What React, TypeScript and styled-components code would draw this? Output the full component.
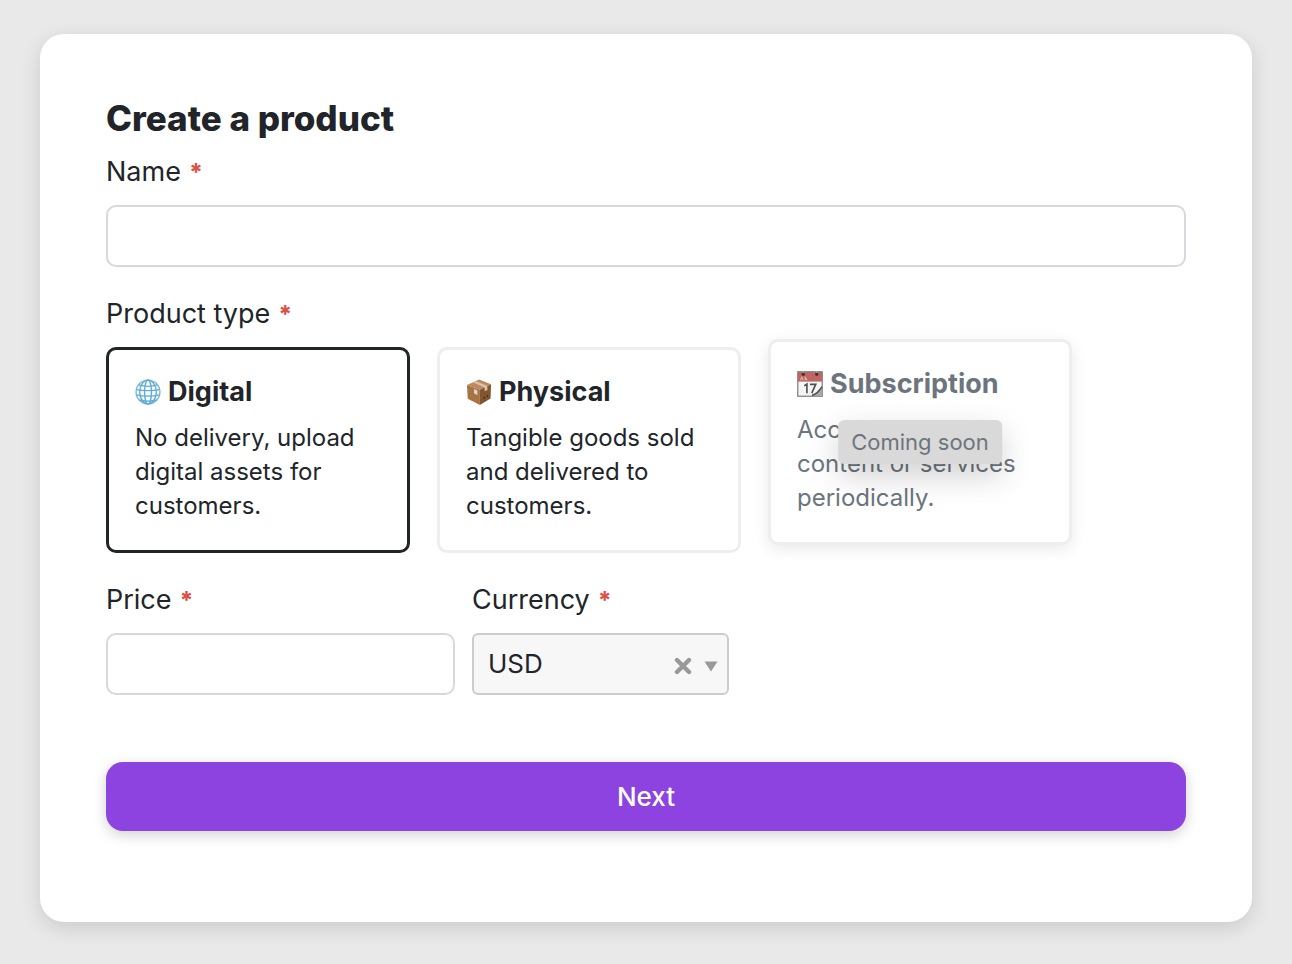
import React, { useState } from "react";
import styled, { createGlobalStyle } from "styled-components";

const GlobalStyle = createGlobalStyle`
  *, *::before, *::after { box-sizing: border-box; }
  body {
    margin: 0;
    background: #e9e9e9;
    color: #212529;
    font-family: Inter, Roboto, sans-serif;
    font-size: 26px;
    line-height: 34px;
  }
  button, input, select { font: inherit; color: inherit; }
`;

const Panel = styled.main`
  margin: 34px 40px 42px;
  padding: 64px 66px 91px;
  background: #fff;
  border-radius: 24px;
  box-shadow: 0 6px 20px rgba(0, 0, 0, 0.13);
`;

const Title = styled.h1`
  margin: 0 0 17px;
  font-size: 35px;
  font-weight: 800;
  line-height: 40px;
`;

const Field = styled.div`
  display: flex;
  flex-direction: column;
  gap: 16px;
`;

const Form = styled.form`
  display: flex;
  flex-direction: column;
  gap: 30px;
`;

const Label = styled.label`
  display: block;
  font-size: 27px;
`;

const TypeField = styled.fieldset`
  margin: 0;
  padding: 0;
  border: 0;
  min-width: 0;
`;

const Legend = styled.legend`
  padding: 0;
  margin-bottom: 16px;
  font-size: 27px;
`;

const Star = styled.span`
  margin-left: 8px;
  color: #d9534a;
  font-size: 24px;
  font-weight: 800;
  line-height: 0;
`;

const TextInput = styled.input`
  width: 100%;
  height: 62px;
  padding: 0 16px;
  border: 2px solid #d5d8de;
  border-radius: 10px;
  background: #fff;
  outline: none;
  &:focus-visible { border-color: #8c43df; }
`;

const TypeGrid = styled.div`
  display: grid;
  grid-template-columns: repeat(3, minmax(0, 304px));
  gap: 27px;
`;

const TypeCard = styled.label<{ $selected: boolean; $disabled?: boolean }>`
  position: relative;
  display: block;
  padding: 25px 26px 27px;
  border: 3px solid ${(p) => (p.$selected ? "#212529" : "#eeeeee")};
  border-radius: 10px;
  background: #fff;
  color: ${(p) => (p.$disabled ? "#6c757d" : "inherit")};
  cursor: ${(p) => (p.$disabled ? "default" : "pointer")};
  ${(p) =>
    p.$disabled &&
    `
    transform: translateY(-8px);
    box-shadow: 0 4px 16px rgba(0, 0, 0, 0.09);
  `}
`;

const HiddenRadio = styled.input`
  position: absolute;
  opacity: 0;
  pointer-events: none;
`;

const TypeName = styled.span`
  display: flex;
  align-items: center;
  gap: 7px;
  margin-bottom: 12px;
  font-size: 27px;
  font-weight: 700;
  svg { flex: none; }
`;

const TypeText = styled.span`
  display: block;
  font-size: 24px;
`;

const Tooltip = styled.span`
  position: absolute;
  top: 50%;
  left: 50%;
  transform: translate(-50%, -50%);
  padding: 5px 13px;
  border-radius: 6px;
  background: #d9d9d9;
  box-shadow: 0 12px 32px rgba(0, 0, 0, 0.18);
  font-size: 22px;
  white-space: nowrap;
`;

const PriceRow = styled.div`
  display: grid;
  grid-template-columns: minmax(0, 349px) minmax(0, 257px);
  gap: 17px;
`;

const SelectBox = styled.div`
  position: relative;
`;

const Select = styled.select`
  display: block;
  width: 100%;
  height: 62px;
  padding: 0 64px 0 14px;
  border: 2px solid #cccccc;
  border-radius: 6px;
  background: #f7f7f7;
  appearance: none;
`;

const SelectIcons = styled.div`
  position: absolute;
  inset: 4px 11px 0 auto;
  display: flex;
  align-items: center;
  gap: 12px;
  pointer-events: none;
`;

const ClearButton = styled.button`
  display: flex;
  padding: 0;
  border: 0;
  background: none;
  pointer-events: auto;
  cursor: pointer;
`;

const NextButton = styled.button`
  width: 100%;
  height: 69px;
  margin-top: 37px;
  border: 0;
  border-radius: 17px;
  background: #8c43df;
  box-shadow: 0 4px 14px rgba(0, 0, 0, 0.18);
  color: #fff;
  font-weight: 500;
  cursor: pointer;
`;

const GlobeIcon = () => (
  <svg width="26" height="26" viewBox="0 0 27 27" fill="none" stroke="#62abcf" strokeWidth="1.4" aria-hidden="true">
    <circle cx="13.5" cy="13.5" r="12.4" fill="#f5fbfe" stroke="#79bad8" />
    <ellipse cx="13.5" cy="13.5" rx="8.6" ry="12.4" />
    <ellipse cx="13.5" cy="13.5" rx="3.6" ry="12.4" />
    <path d="M3.8 6.2Q13.5 9 23.2 6.2M1.4 11Q13.5 13 25.6 11M1.6 16.5Q13.5 19 25.4 16.5M4.4 21.8Q13.5 24 22.6 21.8" />
  </svg>
);

const PackageIcon = () => (
  <svg width="26" height="26" viewBox="0 0 27 27" aria-hidden="true">
    <path d="M1 6.2 13.6 0.4 26 5.4 14.4 11.2Z" fill="#bd8a5e" />
    <path d="M1 6.2 14.4 11.2V27L1.8 20.6Z" fill="#a97443" />
    <path d="M14.4 11.2 26 5.4 25.5 20.2 14.4 27Z" fill="#81552f" />
    <path d="M7.2 3.4 10 2 22.2 7.3V11.3L19.4 12.7V8.7Z" fill="#dcc1ae" />
    <path d="M8.4 10.5 11.8 12V16.6L8.4 15Z" fill="#d9d7d3" />
    <path d="M19 20.6V18.6M22.3 18.8V16.8" stroke="#3e2918" strokeWidth="1.3" />
  </svg>
);

const CalendarIcon = () => (
  <svg width="26" height="26" viewBox="0 0 27 27" aria-hidden="true">
    <rect x="0.8" y="0.8" width="25.4" height="25.4" fill="#f5f5f4" stroke="#777" strokeWidth="1.2" />
    <path d="M1 1H26V11H1Z" fill="#bd6664" />
    <path d="M3.5 9.5 5 6.5 6.5 9.5M8.5 9.5V6.5L10.5 9.5" fill="none" stroke="#e1b895" strokeWidth="1.1" />
    <circle cx="6.5" cy="3.4" r="1.7" fill="#35383b" />
    <circle cx="20.5" cy="3.4" r="1.7" fill="#35383b" />
    <path d="M6.5 0V2M20.5 0V2" stroke="#89a5ac" strokeWidth="1.2" />
    <path d="M7.5 15.4 10.3 13.6V23M13.4 13.9H19.5L15.3 23" fill="none" stroke="#4d4f52" strokeWidth="1.7" />
    <path d="M15 25.8Q20 24 22.2 19.7L26 16V26H15Z" fill="#a8a9aa" />
    <path d="M15.5 25.3Q21.5 23.8 26 16.2" fill="none" stroke="#505153" strokeWidth="1.6" />
  </svg>
);

const productTypes = [
  { id: "digital", name: "Digital", text: "No delivery, upload digital assets for customers.", Icon: GlobeIcon },
  { id: "physical", name: "Physical", text: "Tangible goods sold and delivered to customers.", Icon: PackageIcon },
  {
    id: "subscription",
    name: "Subscription",
    text: "Access to more content or services periodically.",
    Icon: CalendarIcon,
    note: "Coming soon",
  },
];

export default function App() {
  const [type, setType] = useState("digital");
  const [currency, setCurrency] = useState("USD");

  return (
    <>
      <GlobalStyle />
      <Panel>
        <Title>Create a product</Title>
        <Form onSubmit={(e) => e.preventDefault()}>
          <Field>
            <Label htmlFor="name">
              Name<Star>*</Star>
            </Label>
            <TextInput id="name" type="text" required />
          </Field>

          <TypeField>
            <Legend>
              Product type<Star>*</Star>
            </Legend>
            <TypeGrid>
              {productTypes.map(({ id, name, text, Icon, note }) => (
                <TypeCard key={id} $selected={type === id} $disabled={Boolean(note)}>
                  <HiddenRadio
                    type="radio"
                    name="type"
                    value={id}
                    checked={type === id}
                    disabled={Boolean(note)}
                    onChange={() => setType(id)}
                  />
                  <TypeName>
                    <Icon />
                    {name}
                  </TypeName>
                  <TypeText>{text}</TypeText>
                  {note && <Tooltip role="tooltip">{note}</Tooltip>}
                </TypeCard>
              ))}
            </TypeGrid>
          </TypeField>

          <PriceRow>
            <Field>
              <Label htmlFor="price">
                Price<Star>*</Star>
              </Label>
              <TextInput id="price" type="text" inputMode="decimal" required />
            </Field>
            <Field>
              <Label htmlFor="currency">
                Currency<Star>*</Star>
              </Label>
              <SelectBox>
                <Select id="currency" value={currency} onChange={(e) => setCurrency(e.target.value)}>
                  <option value="" />
                  <option value="USD">USD</option>
                  <option value="EUR">EUR</option>
                  <option value="GBP">GBP</option>
                </Select>
                <SelectIcons>
                  <ClearButton type="button" aria-label="Clear currency" onClick={() => setCurrency("")}>
                    <svg width="18" height="18" viewBox="0 0 18 18" aria-hidden="true">
                      <path d="M3 3 15 15M15 3 3 15" stroke="#999" strokeWidth="4.4" strokeLinecap="round" />
                    </svg>
                  </ClearButton>
                  <svg width="14" height="11" viewBox="0 0 14 11" aria-hidden="true">
                    <path d="M0.5 0.5H13.5L7 10.5Z" fill="#999" />
                  </svg>
                </SelectIcons>
              </SelectBox>
            </Field>
          </PriceRow>

          <NextButton type="submit">Next</NextButton>
        </Form>
      </Panel>
    </>
  );
}
